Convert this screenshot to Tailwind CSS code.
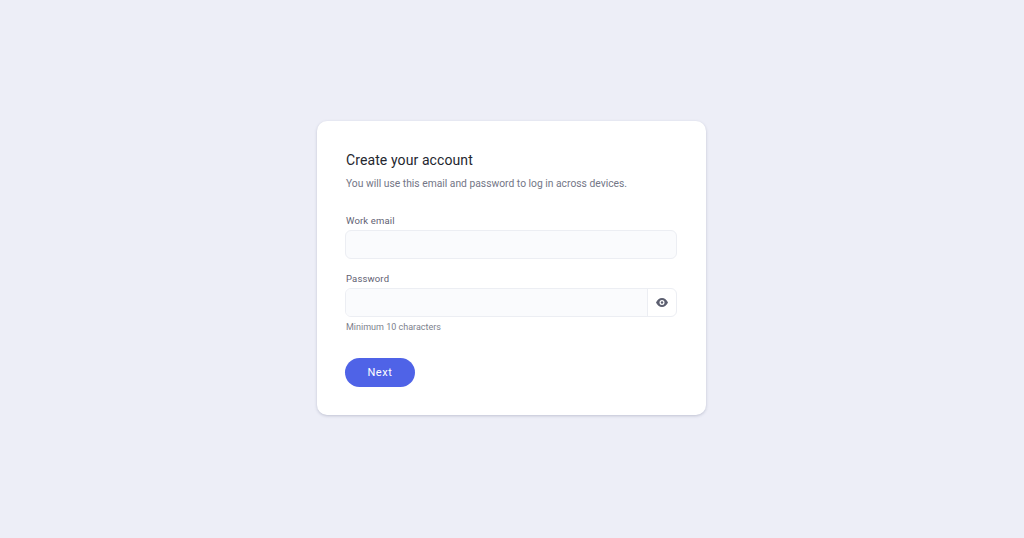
<!DOCTYPE html>
<html lang="en">
<head>
    <meta charset="UTF-8">
    <title>Create your account</title>
    <script src="https://cdn.jsdelivr.net/npm/@tailwindcss/browser@4"></script>
</head>
<body class="bg-[#edeef7] font-['Roboto',sans-serif]">
    <div class="w-[1024px] h-[538px] flex items-start justify-center pt-[121px] pr-[1px]">
        <div class="w-[389px] h-[294px] bg-white rounded-[10px] shadow-[0_1px_3px_rgba(90,95,130,0.3)] pt-[29px] px-[28px]">
            <h1 class="text-[14px] leading-[20px] text-[#24262f] tracking-[0.1px] pl-[1px]">Create your account</h1>
            <p class="mt-[4px] text-[10.3px] leading-[20px] text-[#737686] pl-[1px]">You will use this email and password to log in across devices.</p>

            <label class="block mt-[20px] text-[9.5px] leading-[14px] text-[#5f6172] tracking-[0.15px] pl-[1px]">Work email</label>
            <input type="text" class="block mt-[2px] w-[332px] h-[29px] bg-[#fafbfd] border border-[#eceef3] rounded-[6px]">

            <label class="block mt-[13px] text-[9.5px] leading-[14px] text-[#5f6172] tracking-[0.15px] pl-[1px]">Password</label>
            <div class="mt-[2px] w-[332px] h-[29px] flex border border-[#eceef3] rounded-[6px] overflow-hidden">
                <input type="password" class="flex-1 min-w-0 bg-[#fafbfd]">
                <div class="w-[29px] flex items-center justify-center border-l border-[#eceef3]">
                    <svg width="12" height="9" viewBox="0 0 12 9">
                        <path fill="#5c5f70" fill-rule="evenodd" d="M6 0C3.4 0 1.2 1.8 0 4.5 1.2 7.2 3.4 9 6 9s4.800-1.800 6-4.500C10.800 1.800 8.600 0 6 0Zm0 2a2.500 2.500 0 1 1 0 5 2.500 2.500 0 0 1 0-5Z"/>
                        <circle cx="6" cy="4.500" r="1.200" fill="#5c5f70"/>
                    </svg>
                </div>
            </div>
            <p class="mt-[3px] text-[9px] leading-[14px] text-[#7d7f8d] pl-[1px]">Minimum 10 characters</p>

            <button class="block mt-[24px] w-[70px] h-[29px] pt-[1px] rounded-full bg-[#4f63e7] text-white text-[11px] tracking-[0.6px]">Next</button>
        </div>
    </div>
</body>
</html>
